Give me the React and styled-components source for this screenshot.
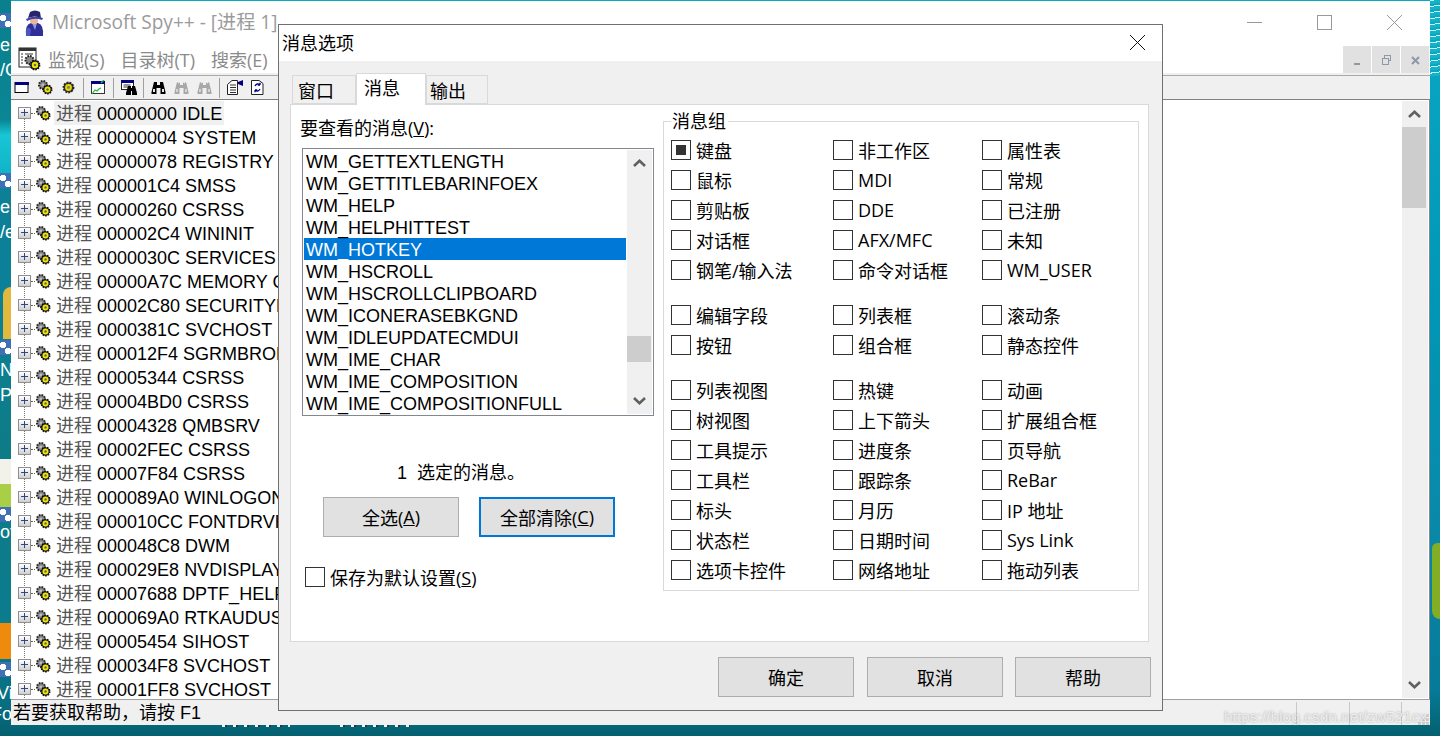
import React from "react";
import styled, { createGlobalStyle } from "styled-components";

const GlobalStyle = createGlobalStyle`
  html, body {
    margin: 0;
    width: 1440px;
    height: 736px;
    overflow: hidden;
    font-family: "Liberation Sans", "Noto Sans CJK SC", sans-serif;
    font-size: 18px;
    color: #000;
  }
  * { box-sizing: border-box; }
`;

const UI_FONT = `"Open Sans", "Noto Sans CJK SC", sans-serif`;

const Desktop = styled.div`
  position: relative;
  width: 1440px;
  height: 736px;
  padding: 1px 10px 11px 11px;
  overflow: hidden;
  background:
    linear-gradient(to bottom, #0a7f8e 0, #0a8694 120px, #18c6d4 135px, #10b4c8 172px, #0d7f96 190px, #0b8098 285px, #0e7c86 460px, #0b7c8e 620px, #086f82 700px, #04606f 736px) left top / 11px 100% no-repeat,
    repeating-linear-gradient(172deg, #c8f2f4 0 1px, #12b2c8 1px 4px, #0ca6c0 4px 6px) right top / 10px 76px no-repeat,
    linear-gradient(to bottom, #0aa8c4 0, #0097b6 300px, #0989aa 520px, #067a98 690px, #04606f 736px);
`;

const ShortcutTile = styled.div`
  position: absolute;
  left: 0;
  top: ${(p) => p.$top}px;
  width: 11px;
  height: 15px;
  background:
    radial-gradient(circle at 3px 5px, #fff 0 3px, transparent 3.5px),
    radial-gradient(circle at 8px 11px, #fff 0 3px, transparent 3.5px),
    #3f6fb5;
`;

const DesktopText = styled.span`
  position: absolute;
  left: ${(p) => p.$left || 0}px;
  top: ${(p) => p.$top}px;
  color: #fff;
  font-size: 18px;
  line-height: 24px;
  white-space: nowrap;
`;

const WallBlob = styled.div`
  position: absolute;
  left: ${(p) => p.$left}px;
  top: ${(p) => p.$top}px;
  width: ${(p) => p.$w}px;
  height: ${(p) => p.$h}px;
  background: ${(p) => p.$bg};
  border-radius: ${(p) => p.$round || "0"};
`;

const LabelTail = styled.div`
  position: absolute;
  left: ${(p) => p.$left}px;
  top: 725px;
  width: ${(p) => p.$w}px;
  height: 2px;
  background: repeating-linear-gradient(to right, #f2f2f2 0 3px, #1a3a44 3px 5px, transparent 5px 11px);
`;

const MainWindow = styled.div`
  position: relative;
  display: flex;
  flex-direction: column;
  width: 100%;
  height: 100%;
  background: #fff;
`;

const TitleBar = styled.div`
  display: flex;
  align-items: center;
  height: 43px;
  padding-left: 12px;
  flex: none;
`;

const AppTitle = styled.span`
  margin: 0 0 3px 7px;
  font-family: ${UI_FONT};
  font-size: 19.1px;
  color: #9b9b9b;
  white-space: nowrap;
`;

const CaptionButtons = styled.div`
  display: flex;
  align-items: center;
  margin-left: auto;
  padding-right: 28px;
  gap: 55px;
`;

const MenuBar = styled.div`
  display: flex;
  align-items: center;
  height: 29px;
  padding-left: 7px;
  flex: none;
`;

const MenuItems = styled.div`
  display: flex;
  gap: 16px;
  margin-left: 6px;
  font-family: ${UI_FONT};
  color: #8a8a8a;
  white-space: nowrap;
`;

const MdiButtons = styled.div`
  display: flex;
  align-self: flex-start;
  gap: 1px;
  margin: 2px 0 0 auto;
  padding-right: 1px;
`;

const MdiButton = styled.div`
  display: flex;
  align-items: center;
  justify-content: center;
  width: 28px;
  height: 28px;
  background: #e1e1e1;
`;

const Toolbar = styled.div`
  display: flex;
  align-items: center;
  gap: 8px;
  height: 25px;
  flex: none;
  margin-top: 2px;
  padding: 0 0 0 3px;
  background: #f0f0f0;
  border-top: 1px solid #a9a9a9;
  border-bottom: 1px solid #808080;
  box-shadow: 0 -2px 0 #f0f0f0;
`;

const ToolSep = styled.div`
  width: 1px;
  height: 20px;
  margin: 0 -1px;
  background: #a0a0a0;
`;

const Client = styled.div`
  display: flex;
  flex: 1;
  min-height: 0;
  border-right: 1px solid #8a8a8a;
`;

const Tree = styled.div`
  flex: 1;
  min-width: 0;
  overflow: hidden;
  padding: 1px 0 0 1px;
  background: repeating-linear-gradient(to bottom, #777 0 1px, transparent 1px 2px) 13px 19px / 1px 100% no-repeat;
`;

const TreeRow = styled.div`
  display: flex;
  align-items: center;
  height: 24px;
  padding-left: 6px;
  white-space: nowrap;
`;

const Expander = styled.div`
  position: relative;
  flex: none;
  width: 13px;
  height: 12px;
  border: 1px solid #8f8f8f;
  background: linear-gradient(to bottom, #fff, #cfcfcf);
  &::before, &::after {
    content: "";
    position: absolute;
    background: #2a4a80;
  }
  &::before { left: 2px; right: 2px; top: 4px; height: 1px; }
  &::after { top: 1px; bottom: 2px; left: 5px; width: 1px; }
`;

const TreeDots = styled.div`
  flex: none;
  width: 4px;
  border-top: 1px dotted #666;
`;

const TreeLabel = styled.span`
  height: 24px;
  line-height: 26px;
  margin-left: 3px;
  padding: 0 2px;
  background: ${(p) => (p.$selected ? "#f0f0f0" : "transparent")};
`;

const ProcessWord = styled.span`
  color: #555;
`;

const ScrollBar = styled.div`
  display: flex;
  flex-direction: column;
  justify-content: space-between;
  flex: none;
  width: 26px;
  margin: 1px 1px 1px 0;
  background: #f0f0f0;
  position: relative;
`;

const ScrollArrow = styled.div`
  display: flex;
  align-items: center;
  justify-content: center;
  height: 26px;
  padding-right: ${(p) => (p.$inset ? 1 : 2)}px;
`;

const ScrollThumb = styled.div`
  position: absolute;
  left: 0;
  top: ${(p) => p.$top}px;
  width: ${(p) => p.$w}px;
  height: ${(p) => p.$h}px;
  background: #cdcdcd;
`;

const StatusBar = styled.div`
  position: relative;
  display: flex;
  align-items: stretch;
  flex: none;
  height: 26px;
  background: #f0f0f0;
  border-top: 1px solid #a0a0a0;
  padding-left: 2px;
`;

const StatusText = styled.div`
  flex: 1;
  line-height: 27px;
  white-space: nowrap;
`;

const StatusPane = styled.div`
  width: ${(p) => p.$w}px;
  margin-top: 2px;
  border-left: 1px solid #c8c8c8;
`;

const Watermark = styled.span`
  position: absolute;
  left: 1224px;
  top: 706px;
  font-size: 15.5px;
  line-height: 22px;
  color: rgba(255, 255, 255, 0.72);
  text-shadow: 0 0 2px rgba(120, 120, 120, 0.7);
  white-space: nowrap;
`;

const Dialog = styled.div`
  position: absolute;
  left: 278px;
  top: 24px;
  width: 885px;
  height: 687px;
  display: flex;
  flex-direction: column;
  background: #f0f0f0;
  border: 1px solid #707070;
`;

const DialogTitle = styled.div`
  display: flex;
  align-items: center;
  justify-content: space-between;
  flex: none;
  height: 36px;
  padding: 0 17px 0 3px;
  background: #fff;
`;

const DialogCaption = styled.span`
  margin-bottom: 3px;
`;

const DialogClose = styled.span`
  display: flex;
  margin-bottom: 1px;
`;

const DialogBody = styled.div`
  flex: 1;
  display: flex;
  flex-direction: column;
  padding: 12px 11px 0 11px;
`;

const TabStrip = styled.div`
  position: relative;
  z-index: 1;
  display: flex;
  align-items: flex-start;
  height: 32px;
  padding-left: 2px;
`;

const Tab = styled.div`
  width: ${(p) => p.$w}px;
  height: ${(p) => (p.$active ? 32 : 29)}px;
  margin-top: ${(p) => (p.$active ? 0 : 2)}px;
  padding-left: ${(p) => p.$pad}px;
  line-height: ${(p) => (p.$active ? 31 : 32)}px;
  border: 1px solid #d9d9d9;
  border-bottom: ${(p) => (p.$active ? "none" : "1px solid #d9d9d9")};
  background: ${(p) => (p.$active ? "#fff" : "#f0f0f0")};
`;

const TabPanel = styled.div`
  display: flex;
  width: 859px;
  height: 538px;
  margin-top: -1px;
  padding: 0 0 0 9px;
  background: #fff;
  border: 1px solid #d9d9d9;
`;

const LeftColumn = styled.div`
  display: flex;
  flex-direction: column;
  flex: none;
  width: 354px;
  margin-right: 9px;
  padding-top: 11px;
`;

const FieldLabel = styled.div`
  height: 24px;
  line-height: 24px;
  font-family: ${UI_FONT};
  white-space: nowrap;
`;

const ListBox = styled.div`
  position: relative;
  display: flex;
  width: 352px;
  height: 268px;
  margin: 8px 0 0 2px;
  padding: 1px;
  border: 1px solid #828790;
`;

const ListRows = styled.div`
  flex: 1;
`;

const ListRow = styled.div`
  height: 22px;
  line-height: 24px;
  padding-left: 2px;
  white-space: nowrap;
  color: ${(p) => (p.$selected ? "#fff" : "#000")};
  background: ${(p) => (p.$selected ? "#0078d7" : "transparent")};
`;

const ListScroll = styled.div`
  position: relative;
  display: flex;
  flex-direction: column;
  justify-content: space-between;
  flex: none;
  width: 25px;
  margin-left: 1px;
  background: #f0f0f0;
`;

const CountText = styled.div`
  height: 24px;
  line-height: 24px;
  margin: 45px 0 0 97px;
  white-space: pre;
`;

const ActionRow = styled.div`
  display: flex;
  gap: 20px;
  margin: 12px 0 0 23px;
`;

const PushButton = styled.div`
  display: flex;
  align-items: center;
  justify-content: center;
  width: 136px;
  height: 40px;
  background: #e1e1e1;
  font-family: ${UI_FONT};
  border: ${(p) => (p.$focused ? "2px solid #0078d7" : "1px solid #adadad")};
`;

const SaveRow = styled.div`
  display: flex;
  align-items: center;
  gap: 5px;
  height: 20px;
  margin: 30px 0 0 5px;
  font-family: ${UI_FONT};
`;

const BoxWrap = styled.span`
  display: flex;
  align-items: center;
  justify-content: center;
  flex: none;
  width: 20px;
  height: 20px;
  border: 1px solid #333;
  background: #fff;
  &::after {
    content: "";
    display: ${(p) => (p.$checked ? "block" : "none")};
    width: 10px;
    height: 10px;
    background: #333;
  }
`;

const GroupBox = styled.fieldset`
  flex: none;
  width: 476px;
  height: 482px;
  margin: 4px 0 0 0;
  padding: 0 0 0 7px;
  border: 1px solid #d9d9d9;
  min-inline-size: 0;
`;

const GroupLegend = styled.legend`
  position: relative;
  top: 1px;
  padding: 0 2px 0 1px;
  line-height: 24px;
`;

const CheckGrid = styled.div`
  display: grid;
  grid-template-columns: 162px 149px 1fr;
  grid-auto-rows: 30px;
  margin-top: ${(p) => p.$gap}px;
`;

const CheckItem = styled.div`
  display: flex;
  align-items: center;
  gap: 5px;
  font-family: ${UI_FONT};
  white-space: nowrap;
`;

const DialogFooter = styled.div`
  display: flex;
  justify-content: flex-end;
  gap: 12px;
  margin-top: 15px;
  > :first-child {
    margin-right: 1px;
  }
`;

const Gears = () => (
  <svg width="16" height="15" viewBox="0 0 16 15" style={{ flex: "none" }}>
    <circle cx="6" cy="5" r="4" fill="#8a8a8a" stroke="#222" strokeWidth="2" strokeDasharray="1.6 1.1" />
    <circle cx="6" cy="5" r="1.6" fill="#bbb" />
    <circle cx="10.5" cy="9.5" r="4.2" fill="#222" stroke="#111" strokeWidth="1.6" strokeDasharray="1.6 1" />
    <circle cx="10.5" cy="9.5" r="3" fill="#f0e800" />
    <circle cx="10.5" cy="9.5" r="1.2" fill="#666" />
  </svg>
);

const SmallGear = () => (
  <svg width="15" height="15" viewBox="0 0 15 15" style={{ flex: "none" }}>
    <circle cx="7.5" cy="7.5" r="5" fill="#333" stroke="#222" strokeWidth="1.8" strokeDasharray="1.8 1.2" />
    <circle cx="7.5" cy="7.5" r="3.4" fill="#e8d800" />
    <circle cx="7.5" cy="7.5" r="1.4" fill="#777" />
  </svg>
);

const WindowIcon = () => (
  <svg width="15" height="15" viewBox="0 0 15 15" style={{ flex: "none" }}>
    <rect x="1" y="2.5" width="13" height="10" fill="#fff" stroke="#000" />
    <rect x="1" y="2" width="14" height="3" fill="#000080" />
  </svg>
);

const ChartIcon = () => (
  <svg width="15" height="15" viewBox="0 0 15 15" style={{ flex: "none" }}>
    <rect x="0.5" y="2.5" width="13" height="11" fill="#fff" stroke="#333" />
    <rect x="0" y="1" width="14" height="3" fill="#000080" />
    <path d="M1 14 L4 10 L6 11 L8 9 L10 8" fill="none" stroke="#19c03a" strokeWidth="1.2" />
    <path d="M10 3 L13 0" stroke="#19c03a" strokeWidth="1.4" />
  </svg>
);

const Binoculars = ({ color = "#000", arrow }) => (
  <svg width="15" height="15" viewBox="0 0 15 15" style={{ flex: "none" }}>
    <path d="M3 2h3v3h3V2h3l2.5 10v2H9.5V8h-4v6H0.5v-2z" fill={color} />
    <rect x="2" y="9" width="2" height="3" fill="#fff" opacity={arrow ? 0.5 : 0.9} />
    <rect x="11" y="9" width="2" height="3" fill="#fff" opacity={arrow ? 0.5 : 0.9} />
    {arrow && <path d="M4 3 Q7.5 -1 11 3" fill="none" stroke="#f0f0f0" strokeWidth="1.4" />}
  </svg>
);

const FindWindowIcon = () => (
  <svg width="16" height="15" viewBox="0 0 16 15" style={{ flex: "none", marginRight: -1 }}>
    <rect x="0.5" y="0.5" width="12" height="9" fill="#fff" stroke="#222" />
    <rect x="0" y="0" width="13" height="3" fill="#000080" />
    <path d="M2.5 5h7M2.5 7h5" stroke="#333" />
    <path d="M7 6h3v2h1V6h3l2 7v2h-5V11h-1v4H5v-2z" fill="#000" />
  </svg>
);

const PropsIcon = () => (
  <svg width="16" height="15" viewBox="0 0 16 15" style={{ flex: "none", marginRight: -1 }}>
    <path d="M0.5 4.5 L5 0.5 H10.5 V14.5 H0.5z" fill="#fff" stroke="#222" />
    <path d="M3 5h6M3 7.5h6M3 10h6M3 12.500h6" stroke="#333" />
    <path d="M11 2 L16 0 V6 L11 4z" fill="#000080" />
  </svg>
);

const RefreshIcon = () => (
  <svg width="15" height="15" viewBox="0 0 15 15" style={{ flex: "none" }}>
    <path d="M1.500 0.500 H9 L13 3.500 V14.500 H1.500z" fill="#fff" stroke="#222" />
    <path d="M5 6 Q7 2.500 10 5 M10 5 V2.800 M10 5 H7.800" fill="none" stroke="#000080" strokeWidth="1.3" />
    <path d="M10 9 Q8 12.500 5 10 M5 10 V12.200 M5 10 H7.200" fill="none" stroke="#000080" strokeWidth="1.3" />
  </svg>
);

const SpyIcon = () => (
  <svg width="22" height="26" viewBox="0 0 22 26" style={{ flex: "none" }}>
    <path d="M3 26 Q2 14 8 13 L15 13 Q21 15 20 26z" fill="#2f2f9a" />
    <path d="M9 13 L12 20 L14 13z" fill="#8fa0e0" />
    <path d="M3 19 Q6 16 8 20 L7 26 H3z" fill="#4a55c0" />
    <ellipse cx="11" cy="10.500" rx="4" ry="3.800" fill="#e9b79a" />
    <path d="M5 8 L7 2 Q12 -1 17 2 L18 8 Q12 5 5 8z" fill="#26266e" />
    <path d="M3 9 Q11 5 20 8 L19 10 Q11 7 4 11z" fill="#3e3ea8" />
  </svg>
);

const MenuDocIcon = () => (
  <svg width="24" height="24" viewBox="0 0 24 24" style={{ flex: "none" }}>
    <rect x="1" y="1" width="17" height="19" fill="#fff" stroke="#222" />
    <rect x="1" y="1" width="17" height="3" fill="#333" />
    <path d="M3 7h2M3 10h2M3 13h2M3 16h2M7 7h8" stroke="#333" />
    <circle cx="11.500" cy="13" r="4" fill="#8a8a8a" stroke="#222" strokeWidth="2" strokeDasharray="1.6 1.1" />
    <circle cx="17" cy="18" r="4.600" fill="#222" stroke="#111" strokeWidth="1.600" strokeDasharray="1.6 1" />
    <circle cx="17" cy="18" r="3.200" fill="#f0e800" />
    <circle cx="17" cy="18" r="1.300" fill="#666" />
  </svg>
);

const Chevron = ({ up }) => (
  <svg width="13" height="8" viewBox="0 0 13 8">
    <path d={up ? "M1 7 L6.500 1.800 L12 7" : "M1 1 L6.500 6.200 L12 1"} fill="none" stroke="#606060" strokeWidth="2.600" />
  </svg>
);

const CrossIcon = ({ color, size = 15 }) => (
  <svg width={size} height={size} viewBox="0 0 15 15" style={{ flex: "none" }}>
    <path d="M0 0 L15 15 M15 0 L0 15" stroke={color} strokeWidth="1" />
  </svg>
);

const MinIcon = () => (
  <svg width="15" height="15" viewBox="0 0 15 15" style={{ flex: "none" }}>
    <path d="M0 7.500 H15" stroke="#999" strokeWidth="1" />
  </svg>
);

const MaxIcon = () => (
  <svg width="15" height="15" viewBox="0 0 15 15" style={{ flex: "none" }}>
    <rect x="0.500" y="0.500" width="14" height="14" fill="none" stroke="#999" />
  </svg>
);

const MdiMin = () => (
  <svg width="8" height="12" viewBox="0 0 8 12">
    <rect x="1" y="9" width="6" height="2" fill="#8d99a8" />
  </svg>
);

const MdiRestore = () => (
  <svg width="9" height="10" viewBox="0 0 9 10">
    <rect x="2.500" y="0.500" width="6" height="5" fill="none" stroke="#8d99a8" />
    <rect x="0.500" y="3.500" width="6" height="6" fill="#e1e1e1" stroke="#8d99a8" />
  </svg>
);

const MdiClose = () => (
  <svg width="9" height="9" viewBox="0 0 9 9">
    <path d="M1 1 L8 8 M8 1 L1 8" stroke="#8d99a8" strokeWidth="2" />
  </svg>
);

const Grip = () => (
  <svg width="12" height="12" viewBox="0 0 12 12" style={{ position: "absolute", right: 0, bottom: 0 }}>
    <path d="M8 1h3v3H8zM4 5h3v3H4zM8 5h3v3H8zM0 9h3v3H0zM4 9h3v3H4zM8 9h3v3H8z" fill="#d0d0d0" />
  </svg>
);

const Mn = styled.u``;

const processes = [
  ["00000000", "IDLE"], ["00000004", "SYSTEM"], ["00000078", "REGISTRY"], ["000001C4", "SMSS"],
  ["00000260", "CSRSS"], ["000002C4", "WININIT"], ["0000030C", "SERVICES"], ["00000A7C", "MEMORY COMPRESSION"],
  ["00002C80", "SECURITYHEALTHSERVICE"], ["0000381C", "SVCHOST"], ["000012F4", "SGRMBROKER"], ["00005344", "CSRSS"],
  ["00004BD0", "CSRSS"], ["00004328", "QMBSRV"], ["00002FEC", "CSRSS"], ["00007F84", "CSRSS"],
  ["000089A0", "WINLOGON"], ["000010CC", "FONTDRVHOST"], ["000048C8", "DWM"], ["000029E8", "NVDISPLAY.CONTAINER"],
  ["00007688", "DPTF_HELPER"], ["000069A0", "RTKAUDUSERVICE64"], ["00005454", "SIHOST"], ["000034F8", "SVCHOST"],
  ["00001FF8", "SVCHOST"],
];

const messages = [
  "WM_GETTEXTLENGTH", "WM_GETTITLEBARINFOEX", "WM_HELP", "WM_HELPHITTEST", "WM_HOTKEY", "WM_HSCROLL",
  "WM_HSCROLLCLIPBOARD", "WM_ICONERASEBKGND", "WM_IDLEUPDATECMDUI", "WM_IME_CHAR", "WM_IME_COMPOSITION",
  "WM_IME_COMPOSITIONFULL",
];

const checkGroups = [
  {
    gap: 2,
    items: ["键盘", "非工作区", "属性表", "鼠标", "MDI", "常规", "剪贴板", "DDE", "已注册", "对话框", "AFX/MFC", "未知", "钢笔/输入法", "命令对话框", "WM_USER"],
  },
  { gap: 15, items: ["编辑字段", "列表框", "滚动条", "按钮", "组合框", "静态控件"] },
  {
    gap: 15,
    items: ["列表视图", "热键", "动画", "树视图", "上下箭头", "扩展组合框", "工具提示", "进度条", "页导航", "工具栏", "跟踪条", "ReBar", "标头", "月历", "IP 地址", "状态栏", "日期时间", "Sys Link", "选项卡控件", "网络地址", "拖动列表"],
  },
];

export default function App() {
  return (
    <>
      <GlobalStyle />
      <Desktop>
        <WallBlob $left={3} $top={287} $w={8} $h={52} $bg="#e2b93c" $round="8px 0 0 0" />
        <WallBlob $left={0} $top={459} $w={11} $h={25} $bg="#f2f2ea" />
        <WallBlob $left={0} $top={484} $w={11} $h={23} $bg="#a8cf45" />
        <WallBlob $left={0} $top={623} $w={11} $h={36} $bg="#ee8a0c" />
        <WallBlob $left={1432} $top={543} $w={8} $h={76} $bg="#83ad23" $round="8px 0 0 12px" />
        {[13, 173, 340, 507, 662].map((t) => (
          <ShortcutTile key={t} $top={t} />
        ))}
        <DesktopText $top={33}>e</DesktopText>
        <DesktopText $top={58}>/C</DesktopText>
        <DesktopText $top={195}>e</DesktopText>
        <DesktopText $top={220}>/e</DesktopText>
        <DesktopText $top={358}>N</DesktopText>
        <DesktopText $top={383}>Pr</DesktopText>
        <DesktopText $top={520}>ot</DesktopText>
        <DesktopText $left={-3} $top={681}>Vi</DesktopText>
        <DesktopText $left={-9} $top={702}>Fo</DesktopText>
        <LabelTail $left={222} $w={68} />
        <LabelTail $left={340} $w={70} />

        <MainWindow>
          <TitleBar>
            <SpyIcon />
            <AppTitle>Microsoft Spy++ - [进程 1]</AppTitle>
            <CaptionButtons>
              <MinIcon />
              <MaxIcon />
              <CrossIcon color="#999" />
            </CaptionButtons>
          </TitleBar>
          <MenuBar>
            <MenuDocIcon />
            <MenuItems>
              <span>监视(S)</span>
              <span>目录树(T)</span>
              <span>搜索(E)</span>
            </MenuItems>
            <MdiButtons>
              <MdiButton><MdiMin /></MdiButton>
              <MdiButton><MdiRestore /></MdiButton>
              <MdiButton><MdiClose /></MdiButton>
            </MdiButtons>
          </MenuBar>
          <Toolbar>
            <WindowIcon />
            <Gears />
            <SmallGear />
            <ToolSep />
            <ChartIcon />
            <ToolSep />
            <FindWindowIcon />
            <ToolSep />
            <Binoculars />
            <Binoculars color="#a8a8a8" arrow />
            <Binoculars color="#a8a8a8" arrow />
            <ToolSep />
            <PropsIcon />
            <RefreshIcon />
          </Toolbar>
          <Client>
            <Tree>
              {processes.map(([id, name], i) => (
                <TreeRow key={id}>
                  <Expander />
                  <TreeDots />
                  <Gears />
                  <TreeLabel $selected={i === 0}>
                    <ProcessWord>进程</ProcessWord> {id} {name}
                  </TreeLabel>
                </TreeRow>
              ))}
            </Tree>
            <ScrollBar>
              <ScrollArrow><Chevron up /></ScrollArrow>
              <ScrollThumb $top={26} $w={24} $h={81} />
              <ScrollArrow><Chevron /></ScrollArrow>
            </ScrollBar>
          </Client>
          <StatusBar>
            <StatusText>若要获取帮助，请按 F1</StatusText>
            <StatusPane $w={53} />
            <StatusPane $w={52} />
            <StatusPane $w={29} />
            <Grip />
          </StatusBar>
        </MainWindow>

        <Dialog>
          <DialogTitle>
            <DialogCaption>消息选项</DialogCaption>
            <DialogClose><CrossIcon color="#111" /></DialogClose>
          </DialogTitle>
          <DialogBody>
            <TabStrip>
              <Tab $w={64} $pad={5}>窗口</Tab>
              <Tab $w={70} $pad={7} $active>消息</Tab>
              <Tab $w={62} $pad={3}>输出</Tab>
            </TabStrip>
            <TabPanel>
              <LeftColumn>
                <FieldLabel>要查看的消息(<Mn>V</Mn>):</FieldLabel>
                <ListBox>
                  <ListRows>
                    {messages.map((m) => (
                      <ListRow key={m} $selected={m === "WM_HOTKEY"}>{m}</ListRow>
                    ))}
                  </ListRows>
                  <ListScroll>
                    <ScrollArrow $inset><Chevron up /></ScrollArrow>
                    <ScrollThumb $top={186} $w={24} $h={26} />
                    <ScrollArrow $inset><Chevron /></ScrollArrow>
                  </ListScroll>
                </ListBox>
                <CountText>1  选定的消息。</CountText>
                <ActionRow>
                  <PushButton>全选(<Mn>A</Mn>)</PushButton>
                  <PushButton $focused>全部清除(<Mn>C</Mn>)</PushButton>
                </ActionRow>
                <SaveRow>
                  <BoxWrap />
                  <span>保存为默认设置(<Mn>S</Mn>)</span>
                </SaveRow>
              </LeftColumn>
              <GroupBox>
                <GroupLegend>消息组</GroupLegend>
                {checkGroups.map((g) => (
                  <CheckGrid key={g.items[0]} $gap={g.gap}>
                    {g.items.map((label) => (
                      <CheckItem key={label}>
                        <BoxWrap $checked={label === "键盘"} />
                        {label}
                      </CheckItem>
                    ))}
                  </CheckGrid>
                ))}
              </GroupBox>
            </TabPanel>
            <DialogFooter>
              <PushButton>确定</PushButton>
              <PushButton>取消</PushButton>
              <PushButton>帮助</PushButton>
            </DialogFooter>
          </DialogBody>
        </Dialog>
        <Watermark>https://blog.csdn.net/zw521cx</Watermark>
      </Desktop>
    </>
  );
}
